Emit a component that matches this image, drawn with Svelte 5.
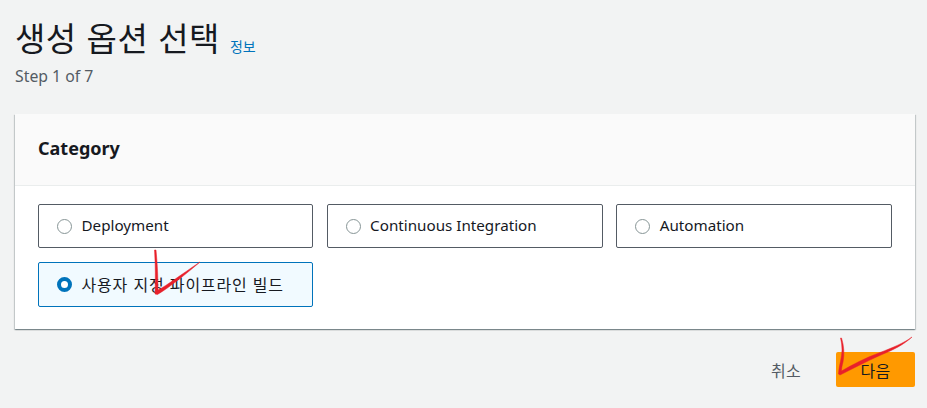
<script>
  const options = [
    { label: 'Deployment', checked: false },
    { label: 'Continuous Integration', checked: false },
    { label: 'Automation', checked: false },
    { label: '사용자 지정 파이프라인 빌드', checked: true }
  ];
</script>

<div class="page">
  <header class="head">
    <div class="title-row">
      <h1>생성 옵션 선택</h1>
      <a href="#info" class="info">정보</a>
    </div>
    <div class="step">Step 1 of 7</div>
  </header>

  <section class="card">
    <div class="card-head"><h2>Category</h2></div>
    <div class="card-body">
      {#each options as o}
        <div class="tile" class:on={o.checked}>
          <span class="radio"></span>
          <span class="label">{o.label}</span>
        </div>
      {/each}
    </div>
  </section>

  <footer class="actions">
    <button class="cancel">취소</button>
    <button class="next">다음</button>
  </footer>

  <svg class="ink" width="927" height="408" viewBox="0 0 927 408" aria-hidden="true">
    <path class="stroke" d="M154.500 250 L156 250 C157.500 265 158 278 158 290 C166 286 182 274 200 262 C186 274 170 287 157.500 294.500 L155 294 C155.500 280 155.500 265 154.500 250Z" />
    <path class="stroke" d="M840.500 338 L841.500 338 C844 346 844.500 354 843 362 C842 366 841.500 368 841.500 371 C852 365 865 358 880 352.500 C893 347.500 904 343 912 337 C904 344.500 893 350 882 354.500 C866 361.500 852 369 840 375 L838.500 374 C839 365 842 358 842 350 C842 346 841.500 342 840.500 338Z" />
  </svg>
</div>

<style>
  :global(body) { margin: 0; background: #f2f3f3; }
  .page {
    position: relative;
    width: 927px;
    height: 408px;
    box-sizing: border-box;
    padding: 17px 12px 0 15px;
    overflow: hidden;
    background: #f2f3f3;
    font-family: "Noto Sans", "Noto Sans CJK KR", sans-serif;
    color: #16191f;
  }
  .title-row { display: flex; align-items: flex-end; gap: 10px; height: 41px; }
  h1 {
    margin: 0;
    font: 400 33px/41px "Noto Sans CJK KR", sans-serif;
    letter-spacing: 0.500px;
    word-spacing: 2px;
  }
  .info {
    font: 400 14px/18px "Noto Sans CJK KR", sans-serif;
    color: #0073bb;
    text-decoration: none;
    margin-bottom: 3px;
  }
  .step { margin-top: 8px; font-size: 15.800px; line-height: 20px; color: #545b64; }
  .card {
    margin-top: 28px;
    background: #fff;
    box-shadow: 0 1px 1px 0 rgba(0, 28, 36, 0.3), 1px 1px 1px 0 rgba(0, 28, 36, 0.15), -1px 1px 1px 0 rgba(0, 28, 36, 0.15);
  }
  .card-head {
    height: 72px;
    box-sizing: border-box;
    display: flex;
    align-items: center;
    padding: 0 23px;
    background: #fafafa;
    border-bottom: 1px solid #eaeded;
  }
  h2 { margin: 0; font-size: 18px; line-height: 24px; font-weight: 700; padding-bottom: 3px; }
  .card-body {
    display: grid;
    grid-template-columns: 275px 276px 276px;
    gap: 14px 13.600px;
    padding: 18px 23px 22px;
  }
  .tile {
    display: flex;
    align-items: center;
    height: 44px;
    box-sizing: border-box;
    padding: 0 18px;
    gap: 9.500px;
    border: 1px solid #545b64;
    border-radius: 2px;
    background: #fff;
    font-size: 15.200px;
  }
  .label { padding-bottom: 2px; }
  .tile.on { height: 45px; border-color: #0073bb; background: #f1faff; }
  .radio {
    width: 15px;
    height: 15px;
    box-sizing: border-box;
    border: 1.500px solid #879596;
    border-radius: 50%;
    background: #fff;
    flex: none;
  }
  .on .radio { border: 4.500px solid #0073bb; }
  .on .label { font-family: "Noto Sans CJK KR", sans-serif; font-size: 16px; letter-spacing: 0.800px; word-spacing: 1px; }
  .actions {
    display: flex;
    justify-content: flex-end;
    align-items: center;
    gap: 20px;
    margin-top: 23px;
  }
  button {
    border: 0;
    background: none;
    font: 400 16px/20px "Noto Sans CJK KR", sans-serif;
    letter-spacing: 0.300px;
    border-radius: 2px;
    height: 35px;
    padding: 0 15px;
  }
  .cancel { color: #545b64; }
  .next { width: 79px; background: #ff9900; color: #16191f; }
  .ink { position: absolute; left: 0; top: 0; pointer-events: none; }
  .stroke { fill: #e8202a; stroke: #e8202a; stroke-width: 0.500; stroke-linejoin: round; }
</style>
